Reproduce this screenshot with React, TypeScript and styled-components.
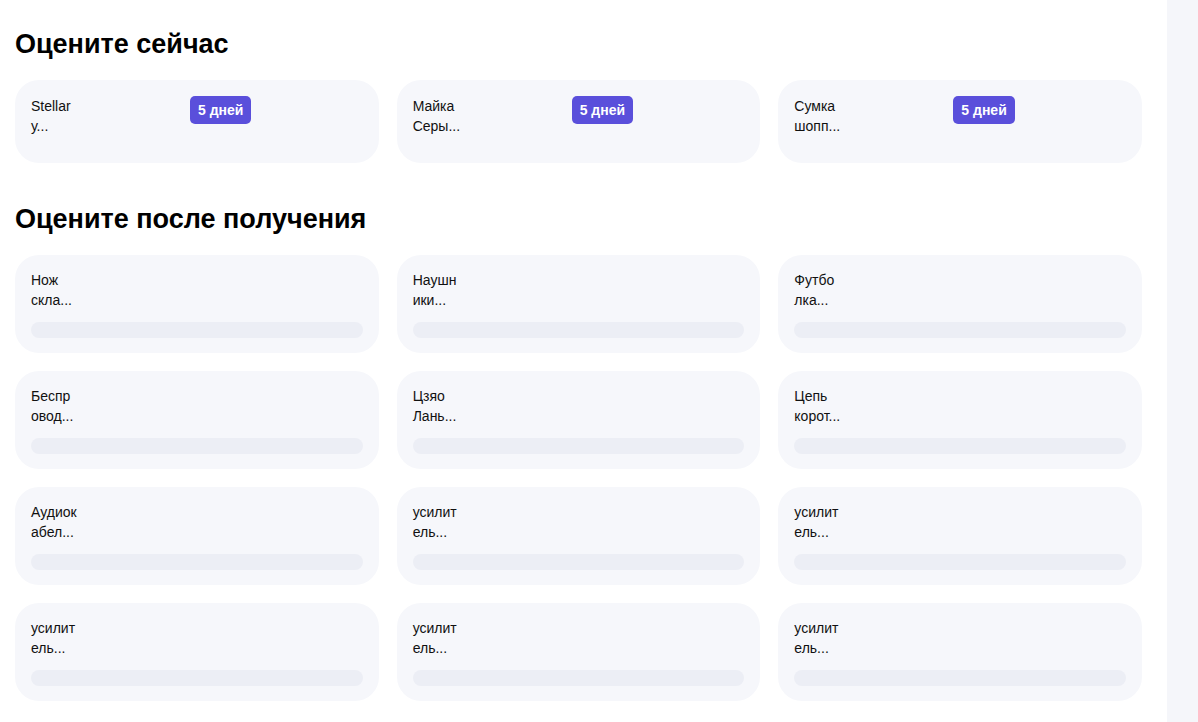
import React from "react";
import styled, { createGlobalStyle } from "styled-components";

const GlobalStyle = createGlobalStyle`
  html, body {
    margin: 0;
    padding: 0;
    background: #ffffff;
  }
  body {
    font-family: "Liberation Sans", Arial, sans-serif;
    color: #111111;
  }
`;

const Page = styled.div`
  display: flex;
  width: 1198px;
  height: 722px;
  overflow: hidden;
`;

const Main = styled.main`
  flex: 1;
  padding: 29px 25px 0 15px;
`;

const Sidebar = styled.aside`
  width: 31px;
  background: #f5f6fa;
`;

const Section = styled.section`
  margin-bottom: 41px;
`;

const Title = styled.h2`
  margin: 0 0 21px;
  font-size: 27px;
  line-height: 30px;
  font-weight: 700;
  color: #000;
`;

const Grid = styled.div`
  display: grid;
  grid-template-columns: repeat(3, 1fr);
  gap: 18px;
`;

const Card = styled.div<{ $tall?: boolean }>`
  box-sizing: border-box;
  background: #f6f7fb;
  border-radius: 24px;
  padding: ${p => (p.$tall ? "15px 16px" : "16px")};
  height: ${p => (p.$tall ? "98px" : "83px")};
  display: flex;
  flex-direction: ${p => (p.$tall ? "column" : "row")};
  align-items: flex-start;
`;

const Name = styled.div<{ $wide?: boolean }>`
  width: ${p => (p.$wide ? "159px" : "auto")};
  font-size: 14px;
  line-height: 20px;
  color: #111;
`;

const Line = styled.div`
  white-space: nowrap;
`;

const Badge = styled.span`
  display: inline-flex;
  align-items: center;
  height: 28px;
  padding: 0 8px;
  border-radius: 5px;
  background: #5a4fdb;
  color: #fff;
  font-size: 14px;
  font-weight: 700;
`;

const Skeleton = styled.div`
  align-self: stretch;
  height: 16px;
  margin-top: 12px;
  border-radius: 8px;
  background: #eceef5;
`;

const nowItems = [
  ["Stellar", "у..."],
  ["Майка", "Серы..."],
  ["Сумка", "шопп..."],
];

const laterItems = [
  ["Нож", "скла..."],
  ["Наушн", "ики..."],
  ["Футбо", "лка..."],
  ["Беспр", "овод..."],
  ["Цзяо", "Лань..."],
  ["Цепь", "корот..."],
  ["Аудиок", "абел..."],
  ["усилит", "ель..."],
  ["усилит", "ель..."],
  ["усилит", "ель..."],
  ["усилит", "ель..."],
  ["усилит", "ель..."],
];

const App = () => {
  return (
    <>
      <GlobalStyle />
      <Page>
        <Main>
          <Section>
            <Title>Оцените сейчас</Title>
            <Grid>
              {nowItems.map((lines, i) => (
                <Card key={i}>
                  <Name $wide>
                    {lines.map((l, j) => (
                      <Line key={j}>{l}</Line>
                    ))}
                  </Name>
                  <Badge>5 дней</Badge>
                </Card>
              ))}
            </Grid>
          </Section>
          <Section>
            <Title>Оцените после получения</Title>
            <Grid>
              {laterItems.map((lines, i) => (
                <Card key={i} $tall>
                  <Name>
                    {lines.map((l, j) => (
                      <Line key={j}>{l}</Line>
                    ))}
                  </Name>
                  <Skeleton />
                </Card>
              ))}
            </Grid>
          </Section>
        </Main>
        <Sidebar />
      </Page>
    </>
  );
};

export default App;
